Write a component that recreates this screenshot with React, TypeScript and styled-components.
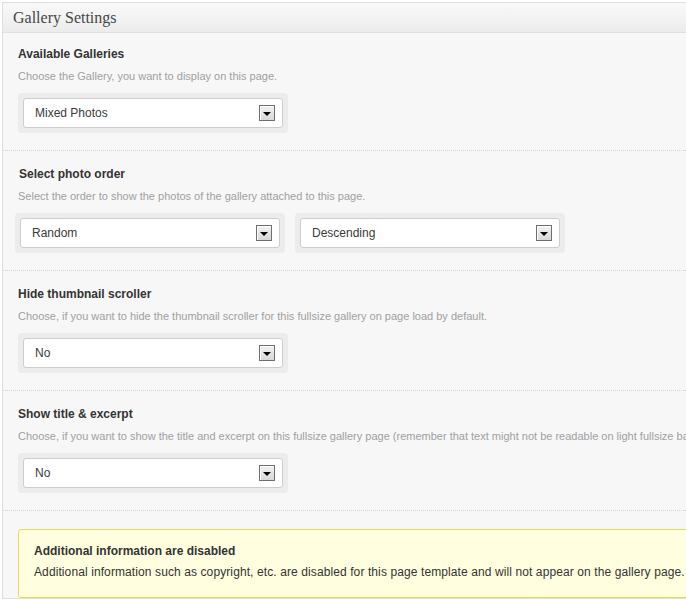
import React from "react";
import styled, { createGlobalStyle } from "styled-components";

const Global = createGlobalStyle`
  html, body { margin: 0; padding: 0; overflow: hidden; background: #ffffff; }
  body { font-family: "Liberation Sans", Arial, sans-serif; }
  * { box-sizing: border-box; }
`;

const Page = styled.div`
  padding: 2px 0 0 2px;
  width: 1000px;
`;

const Panel = styled.div`
  border: 1px solid #dfdfdf;
  border-right: none;
  background: #f7f7f7;
  width: 998px;
`;

const Header = styled.div`
  height: 30px;
  background: linear-gradient(to bottom, #f9f9f9, #ececec);
  border-bottom: 1px solid #dfdfdf;
  display: flex;
  align-items: center;
  padding-left: 10px;
`;

const HeaderTitle = styled.h3`
  margin: 0;
  font-family: "Liberation Serif", Georgia, serif;
  font-size: 16px;
  font-weight: normal;
  color: #464646;
  line-height: 1;
`;

const Section = styled.div<{ $first?: boolean }>`
  padding: ${(p) => (p.$first ? "14px" : "16px")} 15px 17px 15px;
  border-bottom: 1px dotted #d4d4d4;
`;

const Title = styled.div<{ $shift?: number }>`
  font-size: 12px;
  font-weight: bold;
  line-height: 15px;
  color: #333333;
  margin-left: ${(p) => p.$shift ?? 0}px;
`;

const Desc = styled.div`
  font-size: 11px;
  line-height: 14px;
  color: #a0a0a0;
  margin-top: 7px;
  white-space: nowrap;
`;

const SelectRow = styled.div<{ $shift?: number }>`
  display: flex;
  gap: 10px;
  margin-top: 10px;
  margin-left: ${(p) => p.$shift ?? 0}px;
`;

const SelectWrap = styled.div`
  width: 270px;
  height: 40px;
  padding: 5px;
  background: #ececec;
  border-radius: 4px;
`;

const SelectBox = styled.div`
  height: 30px;
  background: #ffffff;
  border: 1px solid #cdcdcd;
  border-radius: 3px;
  display: flex;
  align-items: center;
  justify-content: space-between;
  padding: 0 7px 0 11px;
  font-size: 12px;
  color: #3a3a3a;
`;

const ArrowBox = styled.div`
  width: 16px;
  height: 16px;
  border: 1px solid #6e6e6e;
  background: linear-gradient(to bottom, #f2f2f2, #d8d8d8);
  box-shadow: inset 1px 1px 0 #ffffff;
  display: flex;
  align-items: center;
  justify-content: center;
  padding-top: 2px;
`;

const Arrow = styled.span`
  width: 0;
  height: 0;
  border-left: 4px solid transparent;
  border-right: 4px solid transparent;
  border-top: 4px solid #000000;
`;

const Notice = styled.div`
  margin: 18px 0 0 15px;
  background: #ffffe0;
  border: 1px solid #e6db55;
  border-radius: 3px;
  padding: 14px 15px 15px 15px;
  height: 69px;
`;

const NoticeTitle = styled.div`
  font-size: 12px;
  font-weight: bold;
  line-height: 15px;
  color: #333333;
`;

const NoticeText = styled.div`
  font-size: 12px;
  line-height: 16px;
  letter-spacing: 0.1px;
  color: #333333;
  margin-top: 5px;
  white-space: nowrap;
`;

const Select = ({ value }: { value: string }) => (
  <SelectWrap>
    <SelectBox>
      <span>{value}</span>
      <ArrowBox>
        <Arrow />
      </ArrowBox>
    </SelectBox>
  </SelectWrap>
);

export default function App() {
  return (
    <>
      <Global />
      <Page>
        <Panel>
          <Header>
            <HeaderTitle>Gallery Settings</HeaderTitle>
          </Header>
          <Section $first>
            <Title>Available Galleries</Title>
            <Desc>Choose the Gallery, you want to display on this page.</Desc>
            <SelectRow>
              <Select value="Mixed Photos" />
            </SelectRow>
          </Section>
          <Section>
            <Title $shift={1}>Select photo order</Title>
            <Desc>Select the order to show the photos of the gallery attached to this page.</Desc>
            <SelectRow $shift={-3}>
              <Select value="Random" />
              <Select value="Descending" />
            </SelectRow>
          </Section>
          <Section>
            <Title>Hide thumbnail scroller</Title>
            <Desc>Choose, if you want to hide the thumbnail scroller for this fullsize gallery on page load by default.</Desc>
            <SelectRow>
              <Select value="No" />
            </SelectRow>
          </Section>
          <Section>
            <Title>Show title &amp; excerpt</Title>
            <Desc>
              Choose, if you want to show the title and excerpt on this fullsize gallery page (remember that text might not be readable on light fullsize backgrounds).
            </Desc>
            <SelectRow>
              <Select value="No" />
            </SelectRow>
          </Section>
          <Notice>
            <NoticeTitle>Additional information are disabled</NoticeTitle>
            <NoticeText>
              Additional information such as copyright, etc. are disabled for this page template and will not appear on the gallery page.
            </NoticeText>
          </Notice>
        </Panel>
      </Page>
    </>
  );
}
